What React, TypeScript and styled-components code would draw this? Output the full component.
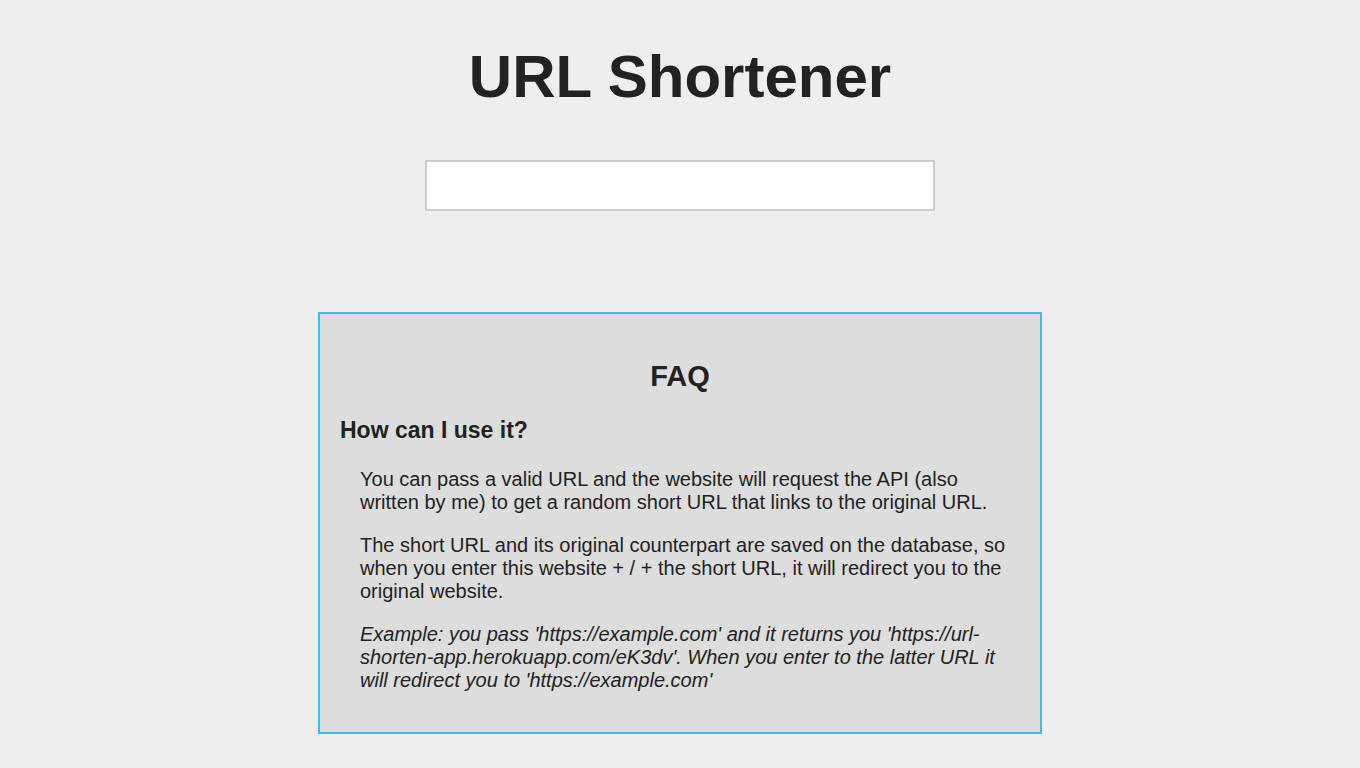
import styled, { createGlobalStyle } from 'styled-components'

const GlobalStyle = createGlobalStyle`
  body {
    margin: 0;
    background-color: #eeeeee;
    color: #222222;
    font-family: "Liberation Sans", Arial, sans-serif;
  }
`

const Page = styled.div`
  display: flex;
  flex-direction: column;
  align-items: center;
  padding-bottom: 40px;
`

const Title = styled.h1`
  font-size: 60px;
  font-weight: bold;
  margin: 42px 0 49px;
`

const UrlInput = styled.input`
  box-sizing: border-box;
  width: 510px;
  height: 51px;
  border: 2px solid #cccccc;
  background: #ffffff;
  font-size: 20px;
  padding: 0 12px;
  font-family: inherit;
  outline: none;
`

const FaqBox = styled.section`
  box-sizing: border-box;
  width: 724px;
  margin-top: 101px;
  padding: 20px;
  background-color: #dddddd;
  border: 2px solid #3bbaf8;
  font-size: 20px;
`

const FaqTitle = styled.h2`
  text-align: center;
  font-size: 29px;
  margin: 26px 0 24px;
`

const Question = styled.h3`
  font-size: 23px;
  margin: 24px 0;
`

const Answer = styled.p<{ $italic?: boolean }>`
  margin: 20px 0 20px 20px;
  line-height: 23px;
  font-style: ${(p) => (p.$italic ? 'italic' : 'normal')};
`

const App = () => {
  return (
    <>
      <GlobalStyle />
      <Page>
        <Title>URL Shortener</Title>
        <UrlInput type="text" />
        <FaqBox>
          <FaqTitle>FAQ</FaqTitle>
          <Question>How can I use it?</Question>
          <Answer>
            You can pass a valid URL and the website will request the API (also written by me) to get a random short URL that links to the original URL.
          </Answer>
          <Answer>
            The short URL and its original counterpart are saved on the database, so when you enter this website + / + the short URL, it will redirect you to the original website.
          </Answer>
          <Answer $italic>
            Example: you pass 'https://example.com' and it returns you 'https://url-shorten-app.herokuapp.com/eK3dv'. When you enter to the latter URL it will redirect you to 'https://example.com'
          </Answer>
        </FaqBox>
      </Page>
    </>
  )
}

export default App
